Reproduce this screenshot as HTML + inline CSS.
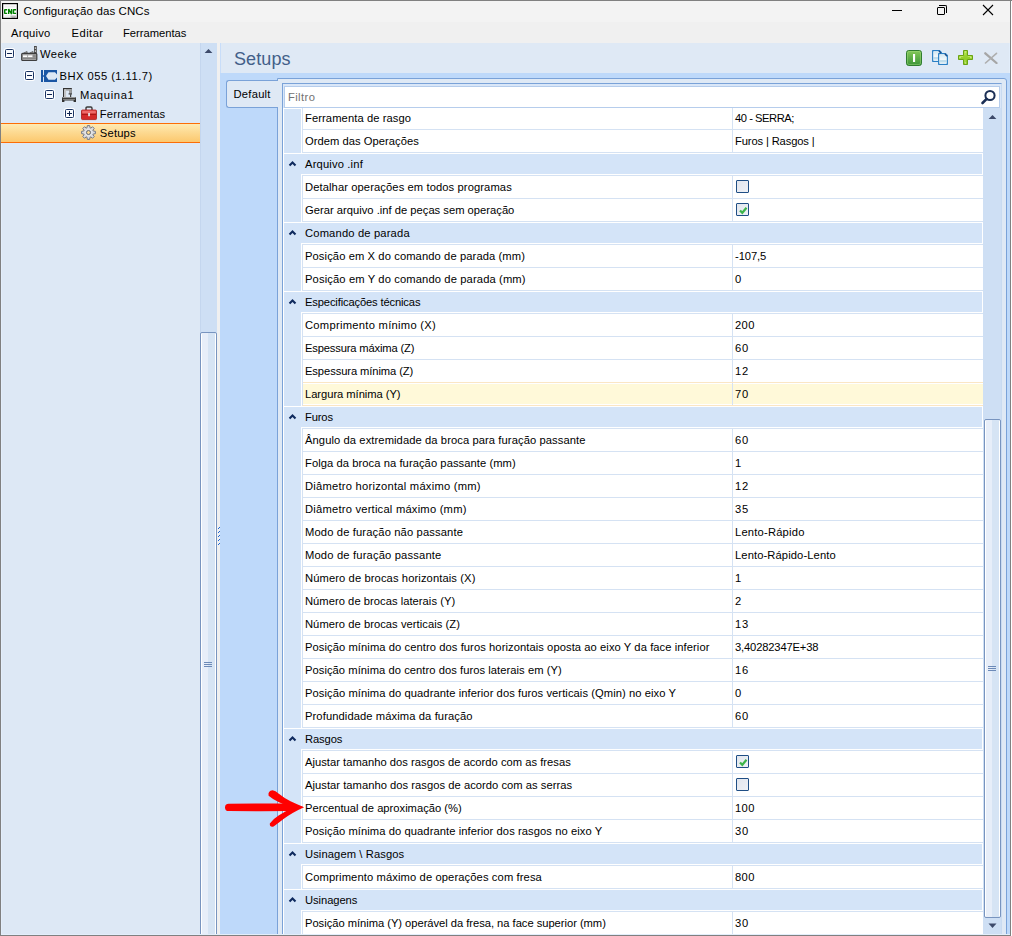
<!DOCTYPE html><html><head><meta charset='utf-8'><style>
*{margin:0;padding:0;box-sizing:border-box}
html,body{width:1012px;height:936px;overflow:hidden;background:#f0f0f0;font-family:"Liberation Sans",sans-serif;font-size:11.2px;color:#000}
.a{position:absolute}
.t{position:absolute;white-space:nowrap;line-height:14px}
</style></head><body><div class="a" style="left:0;top:0;width:1012px;height:22px;background:#f3f3f3"></div>
<svg class="a" style="left:2px;top:3px;" width="16" height="16"><rect x="0.6" y="0.6" width="14.8" height="14.8" fill="#fff" stroke="#000" stroke-width="1.2"/><rect x="2.5" y="2.5" width="11" height="2" fill="#f0f0f0"/><rect x="2.5" y="12" width="11" height="2" fill="#f0f0f0"/><path d="M5.2 6.7H2.7V10.4H5.2M6.7 11.1V6L9.6 11.1V6M14.1 6.7H11.5V10.4H14.1" stroke="#008000" stroke-width="1.4" stroke-linejoin="bevel" fill="none"/><path d="M8.5 13.2H14M9.5 14.5H13.5" stroke="#9a9a9a" stroke-width="0.9"/></svg>
<div class="t" style="left:23.5px;top:4px;font-size:11.5px;letter-spacing:0.1px">Configuração das CNCs</div>
<div class="a" style="left:892px;top:10px;width:10px;height:1px;background:#000"></div>
<div class="a" style="left:937px;top:7px;width:8px;height:8px;border:1px solid #000;border-radius:1px"></div>
<div class="a" style="left:939px;top:5px;width:8px;height:8px;border-top:1px solid #000;border-right:1px solid #000;border-top-right-radius:2px"></div>
<svg class="a" style="left:982px;top:4px;" width="12" height="12"><path d="M1 1L11 11M11 1L1 11" stroke="#000" stroke-width="1.1"/></svg>
<div class="a" style="left:0;top:22px;width:1012px;height:21px;background:#f0f0f0"></div>
<div class="t" style="left:11px;top:26px;letter-spacing:0.23px">Arquivo</div>
<div class="t" style="left:71.6px;top:26px;letter-spacing:0.44px">Editar</div>
<div class="t" style="left:123px;top:26px;">Ferramentas</div>
<div class="a" style="left:0;top:43px;width:200px;height:893px;background:#dde8f5"></div>
<div class="a" style="left:5px;top:49px;width:9px;height:9px;border:1px solid #1c3463;border-radius:1.5px;background:linear-gradient(#f4f7fb,#fff);box-shadow:0 0 0 1px #fff"><div class="a" style="left:1px;top:3px;width:5px;height:1px;background:#10244f"></div></div>
<div class="a" style="left:25px;top:71px;width:9px;height:9px;border:1px solid #1c3463;border-radius:1.5px;background:linear-gradient(#f4f7fb,#fff);box-shadow:0 0 0 1px #fff"><div class="a" style="left:1px;top:3px;width:5px;height:1px;background:#10244f"></div></div>
<div class="a" style="left:45px;top:90px;width:9px;height:9px;border:1px solid #1c3463;border-radius:1.5px;background:linear-gradient(#f4f7fb,#fff);box-shadow:0 0 0 1px #fff"><div class="a" style="left:1px;top:3px;width:5px;height:1px;background:#10244f"></div></div>
<div class="a" style="left:65px;top:109px;width:9px;height:9px;border:1px solid #1c3463;border-radius:1.5px;background:linear-gradient(#f4f7fb,#fff);box-shadow:0 0 0 1px #fff"><div class="a" style="left:1px;top:3px;width:5px;height:1px;background:#10244f"></div><div class="a" style="left:3px;top:1px;width:1px;height:5px;background:#10244f"></div></div>
<svg class="a" style="left:21px;top:45px;" width="17" height="17"><rect x="13" y="1" width="2.8" height="7.5" fill="#4a4a4a"/><rect x="13.8" y="2.3" width="1.2" height="1.6" fill="#d0d0d0"/><rect x="13.8" y="5.3" width="1.2" height="1.6" fill="#d0d0d0"/><path d="M1.8 8.3L5.5 6.2L6.6 6.8L6.2 8.3Z M7.8 8.3L11.5 6.2L12.6 6.8L12.2 8.3Z" fill="#3e3e3e"/><path d="M3 8L5.5 6.8L6 7.8Z M9 8L11.5 6.8L12 7.8Z" fill="#b0b0b0"/><rect x="0.7" y="8.3" width="15.1" height="7.2" rx="1" fill="#a2a2a2" stroke="#3e3e3e" stroke-width="1.2"/><rect x="2" y="10.4" width="4.2" height="1.7" fill="#fff"/><rect x="7.1" y="10.4" width="4.2" height="1.7" fill="#fff"/><rect x="1.6" y="12.8" width="13.3" height="1" fill="#808080"/><rect x="12" y="9.5" width="2.6" height="3" fill="#8a8a8a"/></svg>
<div class="t" style="left:40px;top:47px;letter-spacing:0.5px">Weeke</div>
<svg class="a" style="left:41px;top:70px;" width="17" height="13"><rect x="0" y="0" width="2" height="12" fill="#1a56a4"/><rect x="2" y="5" width="1.5" height="2" fill="#4a7cc0"/><path fill-rule="evenodd" d="M3 0H16V12H3Z M5 6L7.5 2.3H14L16 4.5V7.5L14 9.8H7.5Z" fill="#1a56a4"/></svg>
<div class="t" style="left:59.5px;top:69px;letter-spacing:0.47px">BHX 055 (1.11.7)</div>
<svg class="a" style="left:62px;top:87px;" width="15" height="16"><rect x="1" y="1" width="8.8" height="1.3" fill="#333"/><rect x="1" y="1" width="1.2" height="9.2" fill="#333"/><rect x="2.2" y="2.3" width="1.9" height="7.9" fill="#c4c4c4"/><rect x="4.1" y="2.3" width="2.9" height="1.3" fill="#9a9a9a"/><rect x="7" y="2.3" width="2.8" height="4" fill="#9c9c9c"/><rect x="9.8" y="1" width="0.2" height="5.3" fill="#333"/><rect x="6.6" y="6.3" width="3.4" height="1.2" fill="#333"/><rect x="8.1" y="7.3" width="1.1" height="3" fill="#333"/><path d="M0 10.2H14V15H11.6V13.5H2.4V15H0Z" fill="#333"/><rect x="0.6" y="10.2" width="12.8" height="0.9" fill="#a8a8a8"/><rect x="1.1" y="12" width="11.8" height="0.9" fill="#8c8c8c"/></svg>
<div class="t" style="left:80px;top:88px;letter-spacing:0.66px">Maquina1</div>
<svg class="a" style="left:81px;top:106px;" width="17" height="15"><path d="M5 4.5V2.2Q5 1 6.2 1H9.8Q11 1 11 2.2V4.5" fill="none" stroke="#3a3a3a" stroke-width="1.4"/><rect x="0.5" y="4" width="15" height="9.6" rx="1" fill="#d42a2a" stroke="#a81818" stroke-width="0.8"/><rect x="1.2" y="4.6" width="13.6" height="3" fill="#ef6a6a"/><rect x="1" y="7.8" width="14" height="0.9" fill="#9a1010"/><rect x="7.2" y="7" width="1.7" height="3.2" fill="#e8eef0"/></svg>
<div class="t" style="left:99.8px;top:107px;letter-spacing:0.2px">Ferramentas</div>
<div class="a" style="left:1px;top:123px;width:199px;height:20px;z-index:9;border-top:1px solid #fc6d06;border-bottom:1px solid #fc6d06;background:linear-gradient(#feebb4,#fdda92 45%,#fcc86e)"></div>
<svg class="a" style="left:81px;top:125px;z-index:10" width="16" height="16"><path d="M6.02 2.72L6.32 0.60L8.68 0.60L8.98 2.72L9.83 3.08L11.54 1.78L13.22 3.46L11.92 5.17L12.28 6.02L14.40 6.32L14.40 8.68L12.28 8.98L11.92 9.83L13.22 11.54L11.54 13.22L9.83 11.92L8.98 12.28L8.68 14.40L6.32 14.40L6.02 12.28L5.17 11.92L3.46 13.22L1.78 11.54L3.08 9.83L2.72 8.98L0.60 8.68L0.60 6.32L2.72 6.02L3.08 5.17L1.78 3.46L3.46 1.78L5.17 3.08Z" fill="#dcdcde" stroke="#737985" stroke-width="1" stroke-linejoin="round"/><circle cx="7.5" cy="7.5" r="3.3" fill="none" stroke="#e6e6e6" stroke-width="1"/><circle cx="7.5" cy="7.5" r="2.0" fill="#fcd98e" stroke="#646a78" stroke-width="1"/></svg>
<div class="t" style="left:99.8px;top:126px;letter-spacing:0.2px;z-index:10">Setups</div>
<div class="a" style="left:200px;top:43px;width:17px;height:893px;background:#cedff4;border-left:1px solid #c4d6ee"></div>
<svg class="a" style="left:204px;top:48px;" width="9" height="6"><path d="M0.6 5L4.5 1.1L8.4 5Z" fill="#3d4a6a"/></svg>
<div class="a" style="left:200px;top:332px;width:17px;height:620px;border:1px solid #7894bf;border-radius:2px;background:linear-gradient(90deg,#fff 0,#fff 1px,#e7eef9 1px,#e7eef9 7px,#d6e4f4 7px,#d6e4f4 14px,#fff 14px)"></div>
<div class="a" style="left:204px;top:662px;width:8px;height:1px;background:#6c8ab8"></div>
<div class="a" style="left:204px;top:664px;width:8px;height:1px;background:#6c8ab8"></div>
<div class="a" style="left:204px;top:666px;width:8px;height:1px;background:#6c8ab8"></div>
<div class="a" style="left:217px;top:43px;width:3px;height:893px;background:#f0f0f0"></div>
<div class="a" style="left:219px;top:527px;width:1px;height:1px;background:#1a66d6"></div>
<div class="a" style="left:218px;top:528px;width:1px;height:1px;background:#1a66d6"></div>
<div class="a" style="left:219px;top:531px;width:1px;height:1px;background:#1a66d6"></div>
<div class="a" style="left:218px;top:532px;width:1px;height:1px;background:#1a66d6"></div>
<div class="a" style="left:219px;top:535px;width:1px;height:1px;background:#1a66d6"></div>
<div class="a" style="left:218px;top:536px;width:1px;height:1px;background:#1a66d6"></div>
<div class="a" style="left:219px;top:539px;width:1px;height:1px;background:#1a66d6"></div>
<div class="a" style="left:218px;top:540px;width:1px;height:1px;background:#1a66d6"></div>
<div class="a" style="left:219px;top:543px;width:1px;height:1px;background:#1a66d6"></div>
<div class="a" style="left:218px;top:544px;width:1px;height:1px;background:#1a66d6"></div>
<div class="a" style="left:220px;top:43px;width:792px;height:30px;background:#dfe9f5"></div>
<div class="a" style="left:220px;top:73px;width:792px;height:863px;background:#bed9fa"></div>
<div class="a" style="left:220px;top:43px;width:1px;height:30px;background:#c8ddf9"></div>
<div class="t" style="left:234px;top:48px;font-size:18px;color:#435f89;line-height:22px;letter-spacing:0.1px">Setups</div>
<svg class="a" style="left:906px;top:50px;" width="16" height="16"><defs><linearGradient id="gg" x1="0" y1="0" x2="0" y2="1"><stop offset="0" stop-color="#86c95a"/><stop offset="1" stop-color="#3a9438"/></linearGradient></defs><rect x="0.5" y="0.5" width="15" height="15" rx="2.2" fill="url(#gg)" stroke="#2f7d2f"/><rect x="1.5" y="1.5" width="13" height="13" rx="1.5" fill="none" stroke="#a6dc84" stroke-opacity="0.55" stroke-width="0.8"/><rect x="7" y="4" width="2.1" height="8" fill="#fff"/></svg>
<svg class="a" style="left:931px;top:49px;" width="18" height="18"><defs><linearGradient id="dg" x1="0" y1="0" x2="0" y2="1"><stop offset="0" stop-color="#d4e8f2"/><stop offset="0.55" stop-color="#f4f9fb"/><stop offset="0.7" stop-color="#b4d6e8"/><stop offset="0.85" stop-color="#c8e2ee"/><stop offset="1" stop-color="#ffffff"/></linearGradient></defs><path d="M1.7 1.7H8.5L10.3 3.5V12.3H1.7Z" fill="#fff" stroke="#2a7fc4" stroke-width="1.3" stroke-linejoin="round"/><rect x="2.6" y="2.6" width="5.4" height="8.8" fill="url(#dg)"/><path d="M7.7 4.7H14.5L16.3 6.5V15.3H7.7Z" fill="#fff" stroke="#2a7fc4" stroke-width="1.3" stroke-linejoin="round"/><rect x="8.6" y="5.6" width="6.8" height="8.8" fill="url(#dg)"/><path d="M8.2 2.3L9.6 3.7M14.2 5.3L15.6 6.7" stroke="#1b4c8a" stroke-width="1.3" stroke-linecap="round"/></svg>
<svg class="a" style="left:958px;top:50px;" width="16" height="16"><defs><linearGradient id="pg" x1="0" y1="0" x2="0" y2="1"><stop offset="0" stop-color="#a6dc3a"/><stop offset="1" stop-color="#84c41c"/></linearGradient></defs><path d="M5.5 0.5H9.5V5.5H14.5V9.5H9.5V14.5H5.5V9.5H0.5V5.5H5.5Z" fill="url(#pg)" stroke="#6aa314" stroke-linejoin="round"/><path d="M6.8 2H8.2M2 6.8V8.2M12.9 6.8V8.2M6.8 13H8.2" stroke="#e4f7b8" stroke-width="1"/><path d="M2 6.5H5.2M9.8 6.5H13M7 2V5.2M7 9.8V13" stroke="#c4ec70" stroke-width="0.9" stroke-opacity="0.8"/></svg>
<svg class="a" style="left:984px;top:52px;" width="14" height="12"><path d="M1.3 1.3L12.5 11" stroke="#a6a6a6" stroke-width="2.3" stroke-linecap="round"/><path d="M12.5 1.3L1.5 11" stroke="#aeaeae" stroke-width="1.6" stroke-linecap="round"/></svg>
<div class="a" style="left:226px;top:80px;width:52px;height:28px;background:#dfe9f5;border:1px solid #7aa2d8;border-right:none;border-radius:3px 0 0 3px;z-index:1"></div>
<div class="t" style="left:233.5px;top:87px;z-index:2;letter-spacing:0.25px">Default</div>
<div class="a" style="left:277px;top:78px;width:730px;height:870px;background:#dfe9f5;border:1px solid #7aa2d8;border-radius:0 3px 0 0"></div>
<div class="a" style="left:282px;top:83px;width:720px;height:860px;background:#fff;border:1px solid #7aa2d8;border-right-color:#c9dbf1"></div>
<div class="a" style="left:284px;top:109px;width:17px;height:827px;background:#d4e4f8"></div>
<div class="a" style="left:283px;top:84px;width:718px;height:24px;background:#dae7f8"></div>
<div class="a" style="left:284px;top:86px;width:716px;height:22px;background:#fff;border:1px solid #b6cdec;z-index:2"></div>
<div class="t" style="left:288px;top:90px;color:#727272;z-index:3;letter-spacing:0.4px">Filtro</div>
<svg class="a" style="left:979px;top:88px;z-index:3" width="18" height="18"><circle cx="11" cy="7.5" r="4.6" stroke="#1b2f55" stroke-width="2" fill="none"/><path d="M7.7 10.8L3.5 15" stroke="#1b2f55" stroke-width="2.6" stroke-linecap="round"/></svg>
<div class="a" style="left:301px;top:107px;width:1px;height:23px;background:#fff"></div>
<div class="a" style="left:302px;top:107px;width:681px;height:23px;background:#fff;border-left:1px solid #d5e2f3;border-bottom:1px solid #d5e2f3"></div>
<div class="a" style="left:732px;top:107px;width:1px;height:22px;background:#d5e2f3"></div>
<div class="t" style="left:305px;top:111px;color:#000;letter-spacing:0.089px">Ferramenta de rasgo</div>
<div class="t" style="left:735px;top:111px;color:#000;letter-spacing:-0.47px">40 - SERRA;</div>
<div class="a" style="left:301px;top:130px;width:1px;height:23px;background:#fff"></div>
<div class="a" style="left:302px;top:130px;width:681px;height:23px;background:#fff;border-left:1px solid #d5e2f3;border-bottom:1px solid #d5e2f3"></div>
<div class="a" style="left:732px;top:130px;width:1px;height:22px;background:#d5e2f3"></div>
<div class="t" style="left:305px;top:134px;color:#000;letter-spacing:0.033px">Ordem das Operações</div>
<div class="t" style="left:735px;top:134px;color:#000;letter-spacing:-0.133px">Furos | Rasgos |</div>
<div class="a" style="left:283px;top:153px;width:700px;height:22px;background:#fff"></div>
<div class="a" style="left:284px;top:154px;width:698px;height:20px;background:#d4e4f8"></div>
<div class="a" style="left:284px;top:174px;width:17px;height:2px;background:#d4e4f8"></div>
<div class="a" style="left:302px;top:175px;width:681px;height:1px;background:#d5e2f3"></div>
<svg class="a" style="left:288px;top:160px;" width="9" height="8"><path d="M1.5 5.6L4.5 2.6L7.5 5.6" stroke="#0f2a5e" stroke-width="2.1" fill="none"/></svg>
<div class="t" style="left:305px;top:157px;color:#000;letter-spacing:0.164px">Arquivo .inf</div>
<div class="a" style="left:301px;top:176px;width:1px;height:23px;background:#fff"></div>
<div class="a" style="left:302px;top:176px;width:681px;height:23px;background:#fff;border-left:1px solid #d5e2f3;border-bottom:1px solid #d5e2f3"></div>
<div class="a" style="left:732px;top:176px;width:1px;height:22px;background:#d5e2f3"></div>
<div class="t" style="left:305px;top:180px;color:#000;letter-spacing:0.094px">Detalhar operações em todos programas</div>
<div class="a" style="left:736px;top:180px;width:13px;height:13px;border:1.5px solid #1f4e85;border-radius:1px;background:linear-gradient(135deg,#e2e6ee,#eef1f6)"></div>
<div class="a" style="left:301px;top:199px;width:1px;height:23px;background:#fff"></div>
<div class="a" style="left:302px;top:199px;width:681px;height:23px;background:#fff;border-left:1px solid #d5e2f3;border-bottom:1px solid #d5e2f3"></div>
<div class="a" style="left:732px;top:199px;width:1px;height:22px;background:#d5e2f3"></div>
<div class="t" style="left:305px;top:203px;color:#000;letter-spacing:0.01px">Gerar arquivo .inf de peças sem operação</div>
<div class="a" style="left:736px;top:203px;width:13px;height:13px;border:1.5px solid #1f4e85;border-radius:1px;background:linear-gradient(135deg,#e2e6ee,#eef1f6)"><svg class="a" style="left:1px;top:1px" width="10" height="10"><path d="M2 5.5L4.3 7.8L8.5 2.8" stroke="#3db54a" stroke-width="2.2" fill="none"/></svg></div>
<div class="a" style="left:283px;top:222px;width:700px;height:22px;background:#fff"></div>
<div class="a" style="left:284px;top:223px;width:698px;height:20px;background:#d4e4f8"></div>
<div class="a" style="left:284px;top:243px;width:17px;height:2px;background:#d4e4f8"></div>
<div class="a" style="left:302px;top:244px;width:681px;height:1px;background:#d5e2f3"></div>
<svg class="a" style="left:288px;top:229px;" width="9" height="8"><path d="M1.5 5.6L4.5 2.6L7.5 5.6" stroke="#0f2a5e" stroke-width="2.1" fill="none"/></svg>
<div class="t" style="left:305px;top:226px;color:#000;letter-spacing:0.163px">Comando de parada</div>
<div class="a" style="left:301px;top:245px;width:1px;height:23px;background:#fff"></div>
<div class="a" style="left:302px;top:245px;width:681px;height:23px;background:#fff;border-left:1px solid #d5e2f3;border-bottom:1px solid #d5e2f3"></div>
<div class="a" style="left:732px;top:245px;width:1px;height:22px;background:#d5e2f3"></div>
<div class="t" style="left:305px;top:249px;color:#000;letter-spacing:0.095px">Posição em X do comando de parada (mm)</div>
<div class="t" style="left:735px;top:249px;color:#000;letter-spacing:-0.08px">-107,5</div>
<div class="a" style="left:301px;top:268px;width:1px;height:23px;background:#fff"></div>
<div class="a" style="left:302px;top:268px;width:681px;height:23px;background:#fff;border-left:1px solid #d5e2f3;border-bottom:1px solid #d5e2f3"></div>
<div class="a" style="left:732px;top:268px;width:1px;height:22px;background:#d5e2f3"></div>
<div class="t" style="left:305px;top:272px;color:#000;letter-spacing:0.122px">Posição em Y do comando de parada (mm)</div>
<div class="t" style="left:735px;top:272px;color:#000;letter-spacing:0px">0</div>
<div class="a" style="left:283px;top:291px;width:700px;height:22px;background:#fff"></div>
<div class="a" style="left:284px;top:292px;width:698px;height:20px;background:#d4e4f8"></div>
<div class="a" style="left:284px;top:312px;width:17px;height:2px;background:#d4e4f8"></div>
<div class="a" style="left:302px;top:313px;width:681px;height:1px;background:#d5e2f3"></div>
<svg class="a" style="left:288px;top:298px;" width="9" height="8"><path d="M1.5 5.6L4.5 2.6L7.5 5.6" stroke="#0f2a5e" stroke-width="2.1" fill="none"/></svg>
<div class="t" style="left:305px;top:295px;color:#000;letter-spacing:-0.15px">Especificações técnicas</div>
<div class="a" style="left:301px;top:314px;width:1px;height:23px;background:#fff"></div>
<div class="a" style="left:302px;top:314px;width:681px;height:23px;background:#fff;border-left:1px solid #d5e2f3;border-bottom:1px solid #d5e2f3"></div>
<div class="a" style="left:732px;top:314px;width:1px;height:22px;background:#d5e2f3"></div>
<div class="t" style="left:305px;top:318px;color:#000;letter-spacing:0.276px">Comprimento mínimo (X)</div>
<div class="t" style="left:735px;top:318px;color:#000;letter-spacing:0.35px">200</div>
<div class="a" style="left:301px;top:337px;width:1px;height:23px;background:#fff"></div>
<div class="a" style="left:302px;top:337px;width:681px;height:23px;background:#fff;border-left:1px solid #d5e2f3;border-bottom:1px solid #d5e2f3"></div>
<div class="a" style="left:732px;top:337px;width:1px;height:22px;background:#d5e2f3"></div>
<div class="t" style="left:305px;top:341px;color:#000;letter-spacing:-0.163px">Espessura máxima (Z)</div>
<div class="t" style="left:735px;top:341px;color:#000;letter-spacing:0.8px">60</div>
<div class="a" style="left:301px;top:360px;width:1px;height:23px;background:#fff"></div>
<div class="a" style="left:302px;top:360px;width:681px;height:23px;background:#fff;border-left:1px solid #d5e2f3;border-bottom:1px solid #d5e2f3"></div>
<div class="a" style="left:732px;top:360px;width:1px;height:22px;background:#d5e2f3"></div>
<div class="t" style="left:305px;top:364px;color:#000;letter-spacing:-0.092px">Espessura mínima (Z)</div>
<div class="t" style="left:735px;top:364px;color:#000;letter-spacing:0.8px">12</div>
<div class="a" style="left:301px;top:383px;width:1px;height:23px;background:#fff"></div>
<div class="a" style="left:302px;top:383px;width:681px;height:23px;background:#fff;border-left:1px solid #d5e2f3;border-bottom:1px solid #fbe6c4"></div>
<div class="a" style="left:303px;top:382px;width:680px;height:1px;background:#fbe6c4"></div>
<div class="a" style="left:303px;top:384px;width:429px;height:20px;background:#fff9d9"></div>
<div class="a" style="left:733px;top:384px;width:250px;height:20px;background:#fff9d9"></div>
<div class="a" style="left:732px;top:383px;width:1px;height:22px;background:#d5e2f3"></div>
<div class="t" style="left:305px;top:387px;color:#000;letter-spacing:-0.047px">Largura mínima (Y)</div>
<div class="t" style="left:735px;top:387px;color:#000;letter-spacing:0.8px">70</div>
<div class="a" style="left:283px;top:406px;width:700px;height:22px;background:#fff"></div>
<div class="a" style="left:284px;top:407px;width:698px;height:20px;background:#d4e4f8"></div>
<div class="a" style="left:284px;top:427px;width:17px;height:2px;background:#d4e4f8"></div>
<div class="a" style="left:302px;top:428px;width:681px;height:1px;background:#d5e2f3"></div>
<svg class="a" style="left:288px;top:413px;" width="9" height="8"><path d="M1.5 5.6L4.5 2.6L7.5 5.6" stroke="#0f2a5e" stroke-width="2.1" fill="none"/></svg>
<div class="t" style="left:305px;top:410px;color:#000;letter-spacing:-0.15px">Furos</div>
<div class="a" style="left:301px;top:429px;width:1px;height:23px;background:#fff"></div>
<div class="a" style="left:302px;top:429px;width:681px;height:23px;background:#fff;border-left:1px solid #d5e2f3;border-bottom:1px solid #d5e2f3"></div>
<div class="a" style="left:732px;top:429px;width:1px;height:22px;background:#d5e2f3"></div>
<div class="t" style="left:305px;top:433px;color:#000;letter-spacing:0.084px">Ângulo da extremidade da broca para furação passante</div>
<div class="t" style="left:735px;top:433px;color:#000;letter-spacing:0.8px">60</div>
<div class="a" style="left:301px;top:452px;width:1px;height:23px;background:#fff"></div>
<div class="a" style="left:302px;top:452px;width:681px;height:23px;background:#fff;border-left:1px solid #d5e2f3;border-bottom:1px solid #d5e2f3"></div>
<div class="a" style="left:732px;top:452px;width:1px;height:22px;background:#d5e2f3"></div>
<div class="t" style="left:305px;top:456px;color:#000;letter-spacing:0.063px">Folga da broca na furação passante (mm)</div>
<div class="t" style="left:735px;top:456px;color:#000;letter-spacing:0px">1</div>
<div class="a" style="left:301px;top:475px;width:1px;height:23px;background:#fff"></div>
<div class="a" style="left:302px;top:475px;width:681px;height:23px;background:#fff;border-left:1px solid #d5e2f3;border-bottom:1px solid #d5e2f3"></div>
<div class="a" style="left:732px;top:475px;width:1px;height:22px;background:#d5e2f3"></div>
<div class="t" style="left:305px;top:479px;color:#000;letter-spacing:0.237px">Diâmetro horizontal máximo (mm)</div>
<div class="t" style="left:735px;top:479px;color:#000;letter-spacing:0.8px">12</div>
<div class="a" style="left:301px;top:498px;width:1px;height:23px;background:#fff"></div>
<div class="a" style="left:302px;top:498px;width:681px;height:23px;background:#fff;border-left:1px solid #d5e2f3;border-bottom:1px solid #d5e2f3"></div>
<div class="a" style="left:732px;top:498px;width:1px;height:22px;background:#d5e2f3"></div>
<div class="t" style="left:305px;top:502px;color:#000;letter-spacing:0.214px">Diâmetro vertical máximo (mm)</div>
<div class="t" style="left:735px;top:502px;color:#000;letter-spacing:0.8px">35</div>
<div class="a" style="left:301px;top:521px;width:1px;height:23px;background:#fff"></div>
<div class="a" style="left:302px;top:521px;width:681px;height:23px;background:#fff;border-left:1px solid #d5e2f3;border-bottom:1px solid #d5e2f3"></div>
<div class="a" style="left:732px;top:521px;width:1px;height:22px;background:#d5e2f3"></div>
<div class="t" style="left:305px;top:525px;color:#000;letter-spacing:0.137px">Modo de furação não passante</div>
<div class="t" style="left:735px;top:525px;color:#000;letter-spacing:0.2px">Lento-Rápido</div>
<div class="a" style="left:301px;top:544px;width:1px;height:23px;background:#fff"></div>
<div class="a" style="left:302px;top:544px;width:681px;height:23px;background:#fff;border-left:1px solid #d5e2f3;border-bottom:1px solid #d5e2f3"></div>
<div class="a" style="left:732px;top:544px;width:1px;height:22px;background:#d5e2f3"></div>
<div class="t" style="left:305px;top:548px;color:#000;letter-spacing:0.165px">Modo de furação passante</div>
<div class="t" style="left:735px;top:548px;color:#000;letter-spacing:0.106px">Lento-Rápido-Lento</div>
<div class="a" style="left:301px;top:567px;width:1px;height:23px;background:#fff"></div>
<div class="a" style="left:302px;top:567px;width:681px;height:23px;background:#fff;border-left:1px solid #d5e2f3;border-bottom:1px solid #d5e2f3"></div>
<div class="a" style="left:732px;top:567px;width:1px;height:22px;background:#d5e2f3"></div>
<div class="t" style="left:305px;top:571px;color:#000;letter-spacing:0.1px">Número de brocas horizontais (X)</div>
<div class="t" style="left:735px;top:571px;color:#000;letter-spacing:0px">1</div>
<div class="a" style="left:301px;top:590px;width:1px;height:23px;background:#fff"></div>
<div class="a" style="left:302px;top:590px;width:681px;height:23px;background:#fff;border-left:1px solid #d5e2f3;border-bottom:1px solid #d5e2f3"></div>
<div class="a" style="left:732px;top:590px;width:1px;height:22px;background:#d5e2f3"></div>
<div class="t" style="left:305px;top:594px;color:#000;letter-spacing:0.032px">Número de brocas laterais (Y)</div>
<div class="t" style="left:735px;top:594px;color:#000;letter-spacing:0px">2</div>
<div class="a" style="left:301px;top:613px;width:1px;height:23px;background:#fff"></div>
<div class="a" style="left:302px;top:613px;width:681px;height:23px;background:#fff;border-left:1px solid #d5e2f3;border-bottom:1px solid #d5e2f3"></div>
<div class="a" style="left:732px;top:613px;width:1px;height:22px;background:#d5e2f3"></div>
<div class="t" style="left:305px;top:617px;color:#000;letter-spacing:0.045px">Número de brocas verticais (Z)</div>
<div class="t" style="left:735px;top:617px;color:#000;letter-spacing:0.8px">13</div>
<div class="a" style="left:301px;top:636px;width:1px;height:23px;background:#fff"></div>
<div class="a" style="left:302px;top:636px;width:681px;height:23px;background:#fff;border-left:1px solid #d5e2f3;border-bottom:1px solid #d5e2f3"></div>
<div class="a" style="left:732px;top:636px;width:1px;height:22px;background:#d5e2f3"></div>
<div class="t" style="left:305px;top:640px;color:#000;letter-spacing:0.071px">Posição mínima do centro dos furos horizontais oposta ao eixo Y da face inferior</div>
<div class="t" style="left:735px;top:640px;color:#000;letter-spacing:-0.154px">3,40282347E+38</div>
<div class="a" style="left:301px;top:659px;width:1px;height:23px;background:#fff"></div>
<div class="a" style="left:302px;top:659px;width:681px;height:23px;background:#fff;border-left:1px solid #d5e2f3;border-bottom:1px solid #d5e2f3"></div>
<div class="a" style="left:732px;top:659px;width:1px;height:22px;background:#d5e2f3"></div>
<div class="t" style="left:305px;top:663px;color:#000;letter-spacing:0.049px">Posição mínima do centro dos furos laterais em (Y)</div>
<div class="t" style="left:735px;top:663px;color:#000;letter-spacing:0.8px">16</div>
<div class="a" style="left:301px;top:682px;width:1px;height:23px;background:#fff"></div>
<div class="a" style="left:302px;top:682px;width:681px;height:23px;background:#fff;border-left:1px solid #d5e2f3;border-bottom:1px solid #d5e2f3"></div>
<div class="a" style="left:732px;top:682px;width:1px;height:22px;background:#d5e2f3"></div>
<div class="t" style="left:305px;top:686px;color:#000;letter-spacing:0.069px">Posição mínima do quadrante inferior dos furos verticais (Qmin) no eixo Y</div>
<div class="t" style="left:735px;top:686px;color:#000;letter-spacing:0px">0</div>
<div class="a" style="left:301px;top:705px;width:1px;height:23px;background:#fff"></div>
<div class="a" style="left:302px;top:705px;width:681px;height:23px;background:#fff;border-left:1px solid #d5e2f3;border-bottom:1px solid #d5e2f3"></div>
<div class="a" style="left:732px;top:705px;width:1px;height:22px;background:#d5e2f3"></div>
<div class="t" style="left:305px;top:709px;color:#000;letter-spacing:0.093px">Profundidade máxima da furação</div>
<div class="t" style="left:735px;top:709px;color:#000;letter-spacing:0.8px">60</div>
<div class="a" style="left:283px;top:728px;width:700px;height:22px;background:#fff"></div>
<div class="a" style="left:284px;top:729px;width:698px;height:20px;background:#d4e4f8"></div>
<div class="a" style="left:284px;top:749px;width:17px;height:2px;background:#d4e4f8"></div>
<div class="a" style="left:302px;top:750px;width:681px;height:1px;background:#d5e2f3"></div>
<svg class="a" style="left:288px;top:735px;" width="9" height="8"><path d="M1.5 5.6L4.5 2.6L7.5 5.6" stroke="#0f2a5e" stroke-width="2.1" fill="none"/></svg>
<div class="t" style="left:305px;top:732px;color:#000;letter-spacing:-0.1px">Rasgos</div>
<div class="a" style="left:301px;top:751px;width:1px;height:23px;background:#fff"></div>
<div class="a" style="left:302px;top:751px;width:681px;height:23px;background:#fff;border-left:1px solid #d5e2f3;border-bottom:1px solid #d5e2f3"></div>
<div class="a" style="left:732px;top:751px;width:1px;height:22px;background:#d5e2f3"></div>
<div class="t" style="left:305px;top:755px;color:#000;letter-spacing:0.018px">Ajustar tamanho dos rasgos de acordo com as fresas</div>
<div class="a" style="left:736px;top:755px;width:13px;height:13px;border:1.5px solid #1f4e85;border-radius:1px;background:linear-gradient(135deg,#e2e6ee,#eef1f6)"><svg class="a" style="left:1px;top:1px" width="10" height="10"><path d="M2 5.5L4.3 7.8L8.5 2.8" stroke="#3db54a" stroke-width="2.2" fill="none"/></svg></div>
<div class="a" style="left:301px;top:774px;width:1px;height:23px;background:#fff"></div>
<div class="a" style="left:302px;top:774px;width:681px;height:23px;background:#fff;border-left:1px solid #d5e2f3;border-bottom:1px solid #d5e2f3"></div>
<div class="a" style="left:732px;top:774px;width:1px;height:22px;background:#d5e2f3"></div>
<div class="t" style="left:305px;top:778px;color:#000;letter-spacing:0.031px">Ajustar tamanho dos rasgos de acordo com as serras</div>
<div class="a" style="left:736px;top:778px;width:13px;height:13px;border:1.5px solid #1f4e85;border-radius:1px;background:linear-gradient(135deg,#e2e6ee,#eef1f6)"></div>
<div class="a" style="left:301px;top:797px;width:1px;height:23px;background:#fff"></div>
<div class="a" style="left:302px;top:797px;width:681px;height:23px;background:#fff;border-left:1px solid #d5e2f3;border-bottom:1px solid #d5e2f3"></div>
<div class="a" style="left:732px;top:797px;width:1px;height:22px;background:#d5e2f3"></div>
<div class="t" style="left:305px;top:801px;color:#000;letter-spacing:0.0px">Percentual de aproximação (%)</div>
<div class="t" style="left:735px;top:801px;color:#000;letter-spacing:0.35px">100</div>
<div class="a" style="left:301px;top:820px;width:1px;height:23px;background:#fff"></div>
<div class="a" style="left:302px;top:820px;width:681px;height:23px;background:#fff;border-left:1px solid #d5e2f3;border-bottom:1px solid #d5e2f3"></div>
<div class="a" style="left:732px;top:820px;width:1px;height:22px;background:#d5e2f3"></div>
<div class="t" style="left:305px;top:824px;color:#000;letter-spacing:0.068px">Posição mínima do quadrante inferior dos rasgos no eixo Y</div>
<div class="t" style="left:735px;top:824px;color:#000;letter-spacing:0.8px">30</div>
<div class="a" style="left:283px;top:843px;width:700px;height:22px;background:#fff"></div>
<div class="a" style="left:284px;top:844px;width:698px;height:20px;background:#d4e4f8"></div>
<div class="a" style="left:284px;top:864px;width:17px;height:2px;background:#d4e4f8"></div>
<div class="a" style="left:302px;top:865px;width:681px;height:1px;background:#d5e2f3"></div>
<svg class="a" style="left:288px;top:850px;" width="9" height="8"><path d="M1.5 5.6L4.5 2.6L7.5 5.6" stroke="#0f2a5e" stroke-width="2.1" fill="none"/></svg>
<div class="t" style="left:305px;top:847px;color:#000;letter-spacing:0.094px">Usinagem \ Rasgos</div>
<div class="a" style="left:301px;top:866px;width:1px;height:23px;background:#fff"></div>
<div class="a" style="left:302px;top:866px;width:681px;height:23px;background:#fff;border-left:1px solid #d5e2f3;border-bottom:1px solid #d5e2f3"></div>
<div class="a" style="left:732px;top:866px;width:1px;height:22px;background:#d5e2f3"></div>
<div class="t" style="left:305px;top:870px;color:#000;letter-spacing:0.107px">Comprimento máximo de operações com fresa</div>
<div class="t" style="left:735px;top:870px;color:#000;letter-spacing:0.35px">800</div>
<div class="a" style="left:283px;top:889px;width:700px;height:22px;background:#fff"></div>
<div class="a" style="left:284px;top:890px;width:698px;height:20px;background:#d4e4f8"></div>
<div class="a" style="left:284px;top:910px;width:17px;height:2px;background:#d4e4f8"></div>
<div class="a" style="left:302px;top:911px;width:681px;height:1px;background:#d5e2f3"></div>
<svg class="a" style="left:288px;top:896px;" width="9" height="8"><path d="M1.5 5.6L4.5 2.6L7.5 5.6" stroke="#0f2a5e" stroke-width="2.1" fill="none"/></svg>
<div class="t" style="left:305px;top:893px;color:#000;letter-spacing:-0.062px">Usinagens</div>
<div class="a" style="left:301px;top:912px;width:1px;height:23px;background:#fff"></div>
<div class="a" style="left:302px;top:912px;width:681px;height:23px;background:#fff;border-left:1px solid #d5e2f3;border-bottom:1px solid #d5e2f3"></div>
<div class="a" style="left:732px;top:912px;width:1px;height:22px;background:#d5e2f3"></div>
<div class="t" style="left:305px;top:916px;color:#000;letter-spacing:-0.033px">Posição mínima (Y) operável da fresa, na face superior (mm)</div>
<div class="t" style="left:735px;top:916px;color:#000;letter-spacing:0.8px">30</div>
<div class="a" style="left:983px;top:108px;width:18px;height:828px;background:#cedff4"></div>
<svg class="a" style="left:988px;top:114px;" width="9" height="6"><path d="M0.6 5L4.5 1.1L8.4 5Z" fill="#3d4a6a"/></svg>
<div class="a" style="left:984px;top:419px;width:17px;height:499px;border:1px solid #7894bf;border-radius:2px;background:linear-gradient(90deg,#fff 0,#fff 1px,#e7eef9 1px,#e7eef9 7px,#d6e4f4 7px,#d6e4f4 14px,#fff 14px)"></div>
<div class="a" style="left:988px;top:666px;width:8px;height:1px;background:#6c8ab8"></div>
<div class="a" style="left:988px;top:668px;width:8px;height:1px;background:#6c8ab8"></div>
<div class="a" style="left:988px;top:670px;width:8px;height:1px;background:#6c8ab8"></div>
<svg class="a" style="left:988px;top:923px;" width="9" height="6"><path d="M0.5 0.5L4.5 5L8.5 0.5Z" fill="#3d4a6a"/></svg>
<svg class="a" style="left:220px;top:785px;z-index:5" width="90" height="48"><g fill="#ff0000"><path d="M8.7 18.7Q40 18.3 72 18.6L84 22.2L72 26.1Q40 26.4 8.7 26.1A3.7 3.7 0 0 1 8.7 18.7Z"/><path d="M48.6 10.8Q47.6 5.8 52.6 5.3Q55.5 5.5 58.5 8.5Q64 13 70.5 16.2Q77 19.2 84 22.2L70 21.5Q64 19.5 59 17.3Q52.5 14.2 48.6 10.8Z"/><path d="M49.8 38.6Q49.6 42.6 53.6 41.6Q58.5 38 64.2 33.6Q72 27.6 84 22.2L72.5 22.8Q64.5 26.8 58.6 30.6Q52.5 34.5 49.8 38.6Z"/></g></svg>
<div class="a" style="left:0;top:935px;width:1012px;height:1px;background:#808080;z-index:9"></div>
<div class="a" style="left:1010px;top:0;width:1px;height:936px;background:#808080;z-index:9"></div>
<div class="a" style="left:1011px;top:0;width:1px;height:936px;background:#fff;z-index:9"></div>
<div class="a" style="left:1px;top:43px;width:1px;height:892px;background:#e3eefb;z-index:8"></div>
<div class="a" style="left:1px;top:934px;width:1009px;height:1px;background:#e3eefb;z-index:8"></div>
<div class="a" style="left:1009px;top:43px;width:1px;height:30px;background:#e3eefb;z-index:8"></div>
<div class="a" style="left:0;top:0;width:1px;height:936px;background:#808080;z-index:9"></div>
<div class="a" style="left:0;top:0;width:1012px;height:1px;background:#808080;z-index:9"></div></body></html>
